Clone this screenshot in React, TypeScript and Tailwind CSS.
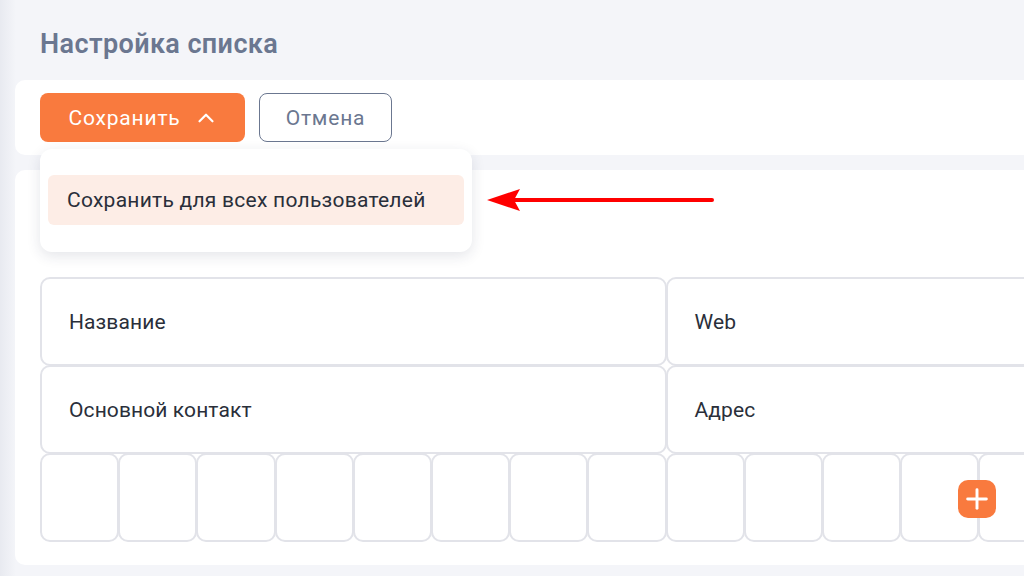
import { ChevronUp, Plus } from 'lucide-react'

const font = { fontFamily: 'Roboto, "Noto Sans", sans-serif' }

function Cell({ label, span }: { label?: string; span: string }) {
  return (
    <div
      className={`${span} h-[89px] -mr-px -mb-px rounded-[10px] border-2 border-[#e2e3e9] bg-white flex items-center pl-[27px] pt-[2px] text-[21px] text-[#2a2f3a] tracking-[0.1px]`}
    >
      {label}
    </div>
  )
}

export default function App() {
  return (
    <div
      className="relative w-[1024px] h-[576px] overflow-hidden bg-[#f4f5f9]"
      style={font}
    >
      <div className="absolute left-0 top-0 h-full w-[16px] bg-gradient-to-r from-[#e8eaf0] to-[#f4f5f9]" />
      <div className="relative pl-[15px] pt-[26px]">
        <h1 className="pl-[25px] text-[27px] leading-[36px] font-semibold text-[#6b7790] tracking-[0.4px]">
          Настройка списка
        </h1>

        <div className="mt-[18px] w-[1040px] h-[75px] rounded-[10px] bg-white flex items-center gap-[14px] pl-[25px]">
          <div className="relative">
            <button
              type="button"
              className="h-[49px] w-[205px] rounded-[8px] bg-[#f97a3e] text-white text-[21px] tracking-[0.8px] flex items-center justify-center gap-[12px] pl-[2px] pt-[3px]"
            >
              Сохранить
              <ChevronUp size={26} strokeWidth={2} className="-mt-[3px]" />
            </button>
            <div className="absolute z-10 left-0 top-[56px] w-[432px] h-[103px] rounded-[12px] bg-white shadow-[0_4px_14px_rgba(30,40,70,0.12)] pt-[26px] px-[8px]">
              <div className="h-[50px] rounded-[6px] bg-[#fdede6] flex items-center pl-[19px] pt-[2px] text-[21px] text-[#2a2f3a] tracking-[0.25px]">
                Сохранить для всех пользователей
              </div>
            </div>
          </div>
          <button
            type="button"
            className="h-[49px] w-[133px] rounded-[8px] border-[1.5px] border-[#6b7790] text-[#6b7790] text-[21px] tracking-[0.8px] pt-[3px]"
          >
            Отмена
          </button>
        </div>

        <div className="mt-[15px] w-[1040px] h-[395px] rounded-[10px] bg-white pt-[107px] pl-[25px] overflow-hidden">
          <div className="grid grid-cols-[repeat(16,78.2px)]">
            <Cell span="col-span-8" label="Название" />
            <Cell span="col-span-8" label="Web" />
            <Cell span="col-span-8" label="Основной контакт" />
            <Cell span="col-span-8" label="Адрес" />
            {Array.from({ length: 16 }).map((_, i) => (
              <Cell key={i} span="col-span-1" />
            ))}
          </div>
        </div>
      </div>

      <div className="absolute left-[958px] top-[480px] w-[38px] h-[38px] rounded-[10px] bg-[#f97a3e] flex items-center justify-center text-white">
        <Plus size={32} strokeWidth={2.2} />
      </div>

      <svg
        className="absolute left-[484px] top-[188px]"
        width="234"
        height="24"
        viewBox="0 0 234 24"
      >
        <line x1="30" y1="12" x2="228" y2="12" stroke="#ff0000" strokeWidth="4" strokeLinecap="round" />
        <polygon points="3,12 36,1 30,12 36,23" fill="#ff0000" />
      </svg>
    </div>
  )
}
